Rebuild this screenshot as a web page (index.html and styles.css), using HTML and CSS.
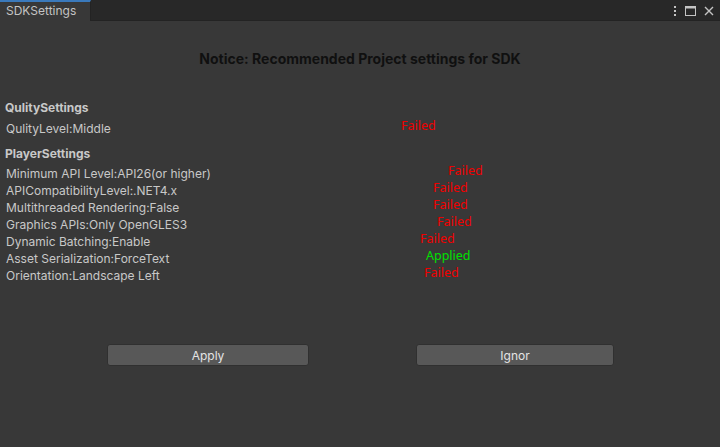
FILE: index.html
```html
<!DOCTYPE html>
<html>
<head>
<meta charset="utf-8">
<link rel="stylesheet" href="styles.css">
</head>
<body>
<div class="window">
  <div class="tabbar">
    <div class="tab">SDKSettings</div>
    <div class="tab-icons">
      <svg width="4" height="12" viewBox="0 0 4 12"><rect x="1" y="1" width="2" height="2" fill="#c4c4c4"/><rect x="1" y="5" width="2" height="2" fill="#c4c4c4"/><rect x="1" y="9" width="2" height="2" fill="#c4c4c4"/></svg>
      <svg width="11" height="10" viewBox="0 0 11 10"><rect x="0.5" y="0.5" width="10" height="9" fill="none" stroke="#c4c4c4"/><rect x="0.5" y="0.5" width="10" height="2" fill="#c4c4c4"/></svg>
      <svg width="10" height="10" viewBox="0 0 10 10"><path d="M1 1L9 9M9 1L1 9" stroke="#c4c4c4" stroke-width="1.4"/></svg>
    </div>
  </div>
  <div class="content">
    <h1 class="notice">Notice: Recommended Project settings for SDK</h1>
    <div class="section-title">QulitySettings</div>
    <div class="row first"><span class="label">QulityLevel:Middle</span><span class="status failed" style="margin-left:395px">Failed</span></div>
    <div class="section-title player">PlayerSettings</div>
    <div class="rows">
      <div class="row"><span class="label">Minimum API Level:API26(or higher)</span><span class="status failed" style="margin-left:442px">Failed</span></div>
      <div class="row"><span class="label">APICompatibilityLevel:.NET4.x</span><span class="status failed" style="margin-left:427px">Failed</span></div>
      <div class="row"><span class="label">Multithreaded Rendering:False</span><span class="status failed" style="margin-left:427px">Failed</span></div>
      <div class="row"><span class="label">Graphics APIs:Only OpenGLES3</span><span class="status failed" style="margin-left:431px">Failed</span></div>
      <div class="row"><span class="label">Dynamic Batching:Enable</span><span class="status failed" style="margin-left:414px">Failed</span></div>
      <div class="row"><span class="label">Asset Serialization:ForceText</span><span class="status applied" style="margin-left:420px">Applied</span></div>
      <div class="row"><span class="label">Orientation:Landscape Left</span><span class="status failed" style="margin-left:418px">Failed</span></div>
    </div>
    <div class="buttons">
      <button class="btn apply">Apply</button>
      <button class="btn ignor">Ignor</button>
    </div>
  </div>
</div>
</body>
</html>
```
FILE: styles.css
```css
* { box-sizing: border-box; }
html, body { margin: 0; padding: 0; }
body {
  width: 720px;
  height: 447px;
  background: #383838;
  font-family: Inter, "Noto Sans", sans-serif;
  font-size: 12px;
  color: #c8c8c8;
  overflow: hidden;
}
.window { width: 720px; height: 447px; display: flex; flex-direction: column; }
.tabbar {
  height: 21px;
  background: #282828;
  border-bottom: 1px solid #232323;
  display: flex;
  align-items: stretch;
  justify-content: space-between;
}
.tab {
  width: 91px;
  background: #383838;
  border-top: 2px solid #3a79bb;
  border-right: 1px solid #232323;
  padding-left: 6px;
  line-height: 18px;
  color: #c4c4c4;
  margin-bottom: -1px;
}
.tab-icons {
  display: flex;
  align-items: center;
  gap: 8px;
  padding-right: 6px;
  padding-top: 1px;
}
.content { flex: 1; display: flex; flex-direction: column; }
.notice {
  margin: 29px 0 0 0;
  text-align: center;
  font-size: 14px;
  font-weight: 700;
  color: #101010;
  line-height: 18px;
}
.section-title {
  font-weight: 700;
  color: #c8c8c8;
  padding-left: 5px;
  line-height: 17px;
  margin-top: 31px;
}
.section-title.player { margin-top: 8px; }
.row {
  display: flex;
  align-items: flex-start;
  height: 17px;
  padding-left: 6px;
  line-height: 17px;
  white-space: nowrap;
}
.row.first { margin-top: 4px; }
.rows { margin-top: 3px; }
.label { color: #c8c8c8; width: 0; overflow: visible; }
.status {
  font-family: "Noto Sans", "DejaVu Sans", sans-serif;
  font-size: 12.5px;
  position: relative;
  top: -3px;
}
.failed { color: #f00000; }
.applied { color: #00e000; }
.buttons {
  display: flex;
  margin-top: 60px;
  padding-left: 107px;
  gap: 107px;
}
.btn {
  height: 22px;
  background: #585858;
  border: 1px solid #303030;
  border-radius: 3px;
  color: #e4e4e4;
  font-family: Inter, "Noto Sans", sans-serif;
  font-size: 12px;
  padding: 0;
}
.btn.apply { width: 202px; }
.btn.ignor { width: 198px; }
```
